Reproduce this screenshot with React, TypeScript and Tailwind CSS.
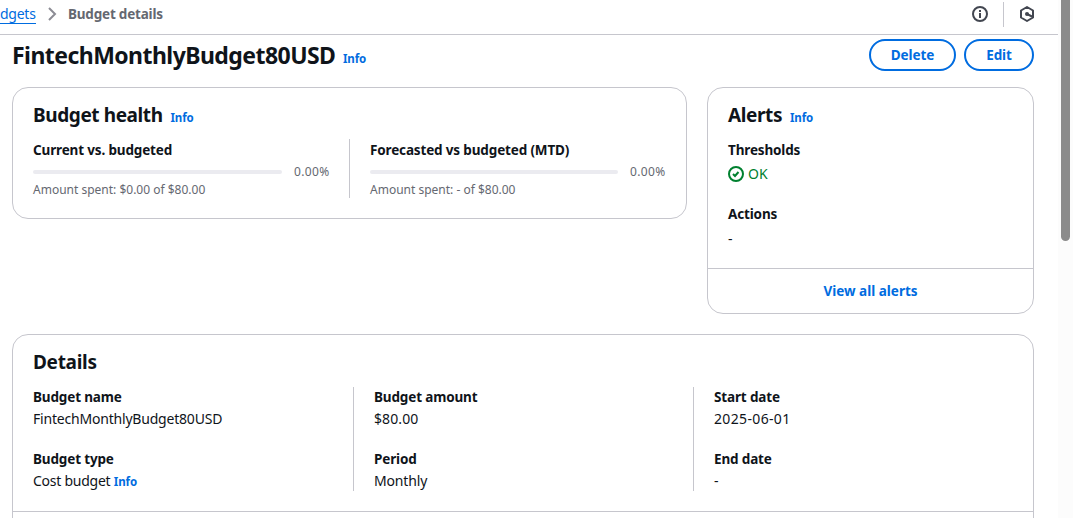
import type { ReactNode } from "react";

const Info = ({ className = "" }: { className?: string }) => (
  <a className={`text-[11.5px] leading-4 font-bold tracking-[-0.1px] text-[#006ce0] ${className}`}>Info</a>
);

const Label = ({ children }: { children: ReactNode }) => (
  <div className="text-[13.5px] leading-[22px] font-bold tracking-[-0.15px]">{children}</div>
);

const Value = ({ children, className = "" }: { children: ReactNode; className?: string }) => (
  <div className={`text-[14px] leading-[22px] ${className}`}>{children}</div>
);

function Progress({ title, note }: { title: string; note: string }) {
  return (
    <div>
      <Label>{title}</Label>
      <div className="flex h-[22px] items-center">
        <div className="h-1 flex-1 rounded-full bg-[#ebebf0]" />
        <span className="ml-3 w-[35px] text-[12px] tracking-[0.35px] text-[#656871]">0.00%</span>
      </div>
      <div className="-mt-px text-[12px] leading-4 text-[#656871]">{note}</div>
    </div>
  );
}

function Field({ label, children, valueClass }: { label: string; children: ReactNode; valueClass?: string }) {
  return (
    <div>
      <Label>{label}</Label>
      <Value className={valueClass}>{children}</Value>
    </div>
  );
}

export default function App() {
  return (
    <div className="flex h-[518px] w-[1073px] overflow-hidden bg-white font-['Noto_Sans',sans-serif] text-[#0f141a]">
      <div className="w-[1058px] shrink-0">
        <header className="flex h-[35px] items-center border-b border-[#c6c6cd] pb-[6px]">
          <a className="w-9 border-b border-[#006ce0] text-[14px] leading-[18px] tracking-[-0.25px] text-[#006ce0]">dgets</a>
          <svg className="ml-2 size-4" viewBox="0 0 16 16" fill="none" stroke="#8c8c94" strokeWidth="2">
            <path d="m5 2 6 6-6 6" />
          </svg>
          <span className="ml-2 text-[13.5px] leading-5 font-bold tracking-[-0.2px] text-[#656871]">Budget details</span>
          <svg className="ml-auto size-4" viewBox="0 0 16 16" fill="none" stroke="#424650" strokeWidth="2">
            <circle cx="8" cy="8" r="7" />
            <path d="M8 4v2M8 7v5" />
            <path d="M7 7.5h1M7 11.5h2" strokeWidth="1" />
          </svg>
          <div className="ml-[15px] h-[25px] w-px bg-[#c6c6cd]" />
          <svg className="mr-[23px] ml-[15px] size-4" viewBox="0 0 16 16" fill="none" stroke="#424650" strokeWidth="2">
            <path d="M8 1l6 3.5v7L8 15l-6-3.5v-7z" strokeLinejoin="round" />
            <path d="m8 8 6 3" />
            <circle cx="8" cy="8" r="2" fill="#424650" stroke="none" />
          </svg>
        </header>

        <main className="pr-6 pl-3">
          <div className="flex h-[52px] items-start pt-1">
            <h1 className="w-[323px] text-[23px] leading-8 font-bold tracking-[-0.55px] whitespace-nowrap">FintechMonthlyBudget80USD</h1>
            <Info className="mt-3 ml-2" />
            <div className="ml-auto flex gap-2">
              <button className="h-8 w-[87px] rounded-full border-2 border-[#006ce0] text-[13.5px] font-bold tracking-[-0.1px] text-[#006ce0]">Delete</button>
              <button className="h-8 w-[70px] rounded-full border-2 border-[#006ce0] text-[13.5px] font-bold tracking-[-0.1px] text-[#006ce0]">Edit</button>
            </div>
          </div>

          <div className="flex items-start gap-5">
            <section className="h-[132px] w-[675px] rounded-2xl border border-[#c6c6cd] px-5 pt-[15px]">
              <div className="flex h-6 items-baseline">
                <h2 className="w-[129.5px] text-[19px] leading-6 font-bold tracking-[-0.4px] whitespace-nowrap">Budget health</h2>
                <Info className="ml-2" />
              </div>
              <div className="mt-3 grid grid-cols-[296px_295px] gap-[41px]">
                <Progress title="Current vs. budgeted" note="Amount spent: $0.00 of $80.00" />
                <div className="-ml-[21px] border-l border-[#c6c6cd] pl-5">
                  <Progress title="Forecasted vs budgeted (MTD)" note="Amount spent: - of $80.00" />
                </div>
              </div>
            </section>

            <section className="flex h-[227px] w-[327px] flex-col rounded-2xl border border-[#c6c6cd]">
              <div className="flex-1 px-5 pt-[15px]">
                <div className="flex h-6 items-baseline">
                  <h2 className="w-[54px] text-[19px] leading-6 font-bold tracking-[-0.4px] whitespace-nowrap">Alerts</h2>
                  <Info className="ml-2" />
                </div>
                <div className="mt-3">
                  <Label>Thresholds</Label>
                </div>
                <div className="mt-0.5 flex h-[22px] items-center gap-1 text-[14px] text-[#00802f]">
                  <svg className="size-4" viewBox="0 0 16 16" fill="none" stroke="currentColor" strokeWidth="2">
                    <circle cx="8" cy="8" r="7" />
                    <path d="m5 8 2 2 3.5-4" />
                  </svg>
                  <span className="-mt-0.5">OK</span>
                </div>
                <div className="mt-[18px]">
                  <Label>Actions</Label>
                </div>
                <div className="mt-[3px]">
                  <Value>-</Value>
                </div>
              </div>
              <div className="flex h-[45px] items-center justify-center border-t border-[#c6c6cd] text-[13.5px] font-bold text-[#006ce0]">
                View all alerts
              </div>
            </section>
          </div>

          <section className="mt-5 h-[220px] rounded-2xl border border-[#c6c6cd]">
            <h2 className="px-5 pt-[15px] text-[19px] leading-6 font-bold tracking-[-0.3px]">Details</h2>
            <div className="mt-[13px] flex h-[104px] px-5">
              <div className="-mt-px w-80 space-y-[18px]">
                <Field label="Budget name" valueClass="tracking-[-0.2px]">FintechMonthlyBudget80USD</Field>
                <Field label="Budget type" valueClass="tracking-[-0.25px]">Cost budget <Info /></Field>
              </div>
              <div className="w-[340px] border-l border-[#c6c6cd] pl-5">
                <div className="-mt-px space-y-[18px]">
                  <Field label="Budget amount" valueClass="tracking-[0.1px]">$80.00</Field>
                  <Field label="Period" valueClass="tracking-[-0.15px]">Monthly</Field>
                </div>
              </div>
              <div className="border-l border-[#c6c6cd] pl-5">
                <div className="-mt-px space-y-[18px]">
                  <Field label="Start date" valueClass="tracking-[0.35px]">2025-06-01</Field>
                  <Field label="End date">-</Field>
                </div>
              </div>
            </div>
            <div className="mt-5 border-t border-[#c6c6cd]" />
          </section>
        </main>
      </div>
      <div className="flex w-[15px] justify-center bg-[#fcfcfc]">
        <div className="h-[241px] w-[9px] rounded-b-full bg-[#8b8b8b]" />
      </div>
    </div>
  );
}
